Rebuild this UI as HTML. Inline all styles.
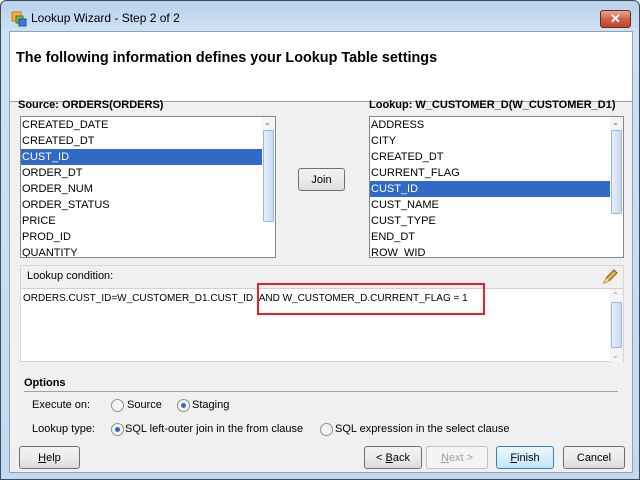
<!DOCTYPE html>
<html><head><style>
*{margin:0;padding:0;box-sizing:border-box}
body{width:640px;height:480px;overflow:hidden;font-family:"Liberation Sans",sans-serif;font-size:11px;color:#000;background:#fff}
.win{position:absolute;left:0;top:0;width:640px;height:480px;background:linear-gradient(#b9d1ea,#cfe0f3 30px,#c4d9ef);border:1px solid #3a4d63;border-radius:6px 6px 0 0}
.title{position:absolute;left:30px;top:10px;font-size:12px;color:#000}
.close{position:absolute;left:599px;top:9px;width:31px;height:18px;border:1px solid #6b2a20;border-radius:3px;background:linear-gradient(#e8a393,#d0634c 50%,#c0432a);color:#fff;font-weight:bold;text-align:center;font-size:13px;line-height:16px}
.client{position:absolute;left:8px;top:30px;width:624px;height:442px;background:#f0f0f0;border:1px solid #8aa3be}
.hdr{position:absolute;left:0;top:0;width:622px;height:70px;background:#fff;border-bottom:1px solid #a0a0a0}
.hdr b{position:absolute;left:6px;top:18px;font-size:14.4px}
.abs{position:absolute;white-space:nowrap}
.lb{position:absolute;background:#fff;border:1px solid #828790;overflow:hidden}
.lb div{height:16px;line-height:16px;padding-left:1px;font-size:11px;white-space:nowrap}
.lb .sel{background:#3169c6;color:#fff;margin-right:13px}
.sb{position:absolute;right:0;top:0;width:13px;height:100%;background:#f4f4f4}
.thumb{position:absolute;left:1px;width:11px;background:linear-gradient(90deg,#e6eefb,#c9d9f1);border:1px solid #9fb7d6;border-radius:2px}
.arr{position:absolute;left:2px;font-size:8px;color:#999}
.btn{position:absolute;height:23px;border:1px solid #707070;border-radius:3px;background:linear-gradient(#f2f2f2,#ebebeb 50%,#dcdcdc);text-align:center;line-height:22px;font-size:11px}
.radio{position:absolute;width:13px;height:13px;border:1px solid #8f8f8f;border-radius:50%;background:#f4f4f4}
.radio.on:after{content:"";position:absolute;left:3px;top:3px;width:5px;height:5px;border-radius:50%;background:#3a68b8}
</style></head><body>
<div class="win">
<svg class="abs" style="left:10px;top:10px" width="16" height="16"><rect x="1" y="1" width="9" height="9" fill="#f3b23a" stroke="#c07a10"/><rect x="5" y="5" width="7" height="7" fill="#7bb84a" stroke="#3f7a22"/><rect x="8" y="8" width="7" height="7" fill="#3d7fd6" stroke="#1f4f9a"/></svg>
<div class="title">Lookup Wizard - Step 2 of 2</div>
<div class="close">✕</div>
<div class="client">
<div class="hdr"><b>The following information defines your Lookup Table settings</b></div>
<div class="abs" style="left:8px;top:67px;font-weight:bold">Source: ORDERS(ORDERS)</div>
<div class="abs" style="left:359px;top:67px;font-weight:bold">Lookup: W_CUSTOMER_D(W_CUSTOMER_D1)</div>
<div class="lb" style="left:10px;top:84px;width:256px;height:142px">
<div>CREATED_DATE</div><div>CREATED_DT</div><div class="sel">CUST_ID</div><div>ORDER_DT</div><div>ORDER_NUM</div><div>ORDER_STATUS</div><div>PRICE</div><div>PROD_ID</div><div>QUANTITY</div>
<div class="sb"><span class="arr" style="top:2px">⌃</span><div class="thumb" style="top:13px;height:92px"></div><span class="arr" style="bottom:2px">⌄</span></div></div>
<div class="btn" style="left:288px;top:136px;width:47px">Join</div>
<div class="lb" style="left:359px;top:84px;width:255px;height:142px">
<div>ADDRESS</div><div>CITY</div><div>CREATED_DT</div><div>CURRENT_FLAG</div><div class="sel">CUST_ID</div><div>CUST_NAME</div><div>CUST_TYPE</div><div>END_DT</div><div>ROW_WID</div>
<div class="sb"><span class="arr" style="top:2px">⌃</span><div class="thumb" style="top:13px;height:84px"></div><span class="arr" style="bottom:2px">⌄</span></div></div>
<div class="abs" style="left:10px;top:233px;width:604px;height:97px;border:1px solid #d5d5d5;background:#f0f0f0">
<div class="abs" style="left:6px;top:4px">Lookup condition:</div>
<svg class="abs" style="left:580px;top:2px" width="18" height="18"><path d="M3 15 L5 10 L13 2 L16 5 L8 13 Z" fill="#e8b23a" stroke="#7a5a10"/><path d="M3 15 L5 10 L8 13 Z" fill="#f3d9a0"/></svg>
<div class="abs" style="left:0;top:22px;width:602px;height:73px;background:#fff;border-top:1px solid #d0d0d0">
<div class="abs" style="left:2px;top:4px;font-size:10px">ORDERS.CUST_ID=W_CUSTOMER_D1.CUST_ID &nbsp;AND W_CUSTOMER_D.CURRENT_FLAG = 1</div>
<div class="abs" style="right:0;top:0;width:13px;height:73px;background:#f4f4f4"><span class="arr" style="top:2px">⌃</span><div class="thumb" style="top:13px;height:46px"></div><span class="arr" style="bottom:2px">⌄</span></div>
</div></div>
<div class="abs" style="left:247px;top:251px;width:228px;height:32px;border:2px solid #e8202a"></div>
<div class="abs" style="left:14px;top:345px;font-weight:bold">Options</div>
<div class="abs" style="left:14px;top:359px;width:594px;height:1px;background:#a0a0a0"></div>
<div class="abs" style="left:22px;top:367px">Execute on:</div>
<span class="radio" style="left:101px;top:367px"></span><div class="abs" style="left:117px;top:367px">Source</div>
<span class="radio on" style="left:167px;top:367px"></span><div class="abs" style="left:182px;top:367px">Staging</div>
<div class="abs" style="left:22px;top:391px">Lookup type:</div>
<span class="radio on" style="left:101px;top:391px"></span><div class="abs" style="left:115px;top:391px">SQL left-outer join in the from clause</div>
<span class="radio" style="left:310px;top:391px"></span><div class="abs" style="left:325px;top:391px">SQL expression in the select clause</div>
<div class="btn" style="left:9px;top:414px;width:61px"><u>H</u>elp</div>
<div class="btn" style="left:354px;top:414px;width:58px">&lt; <u>B</u>ack</div>
<div class="btn" style="left:416px;top:414px;width:62px;color:#a0a0a0;border-color:#c0c0c0;background:#f4f4f4"><u>N</u>ext &gt;</div>
<div class="btn" style="left:486px;top:414px;width:58px;border-color:#3c7fb1;background:linear-gradient(#eaf6fd,#d9f0fc 50%,#bee6fd)"><u>F</u>inish</div>
<div class="btn" style="left:553px;top:414px;width:62px">Cancel</div>
</div></div>
</body></html>
